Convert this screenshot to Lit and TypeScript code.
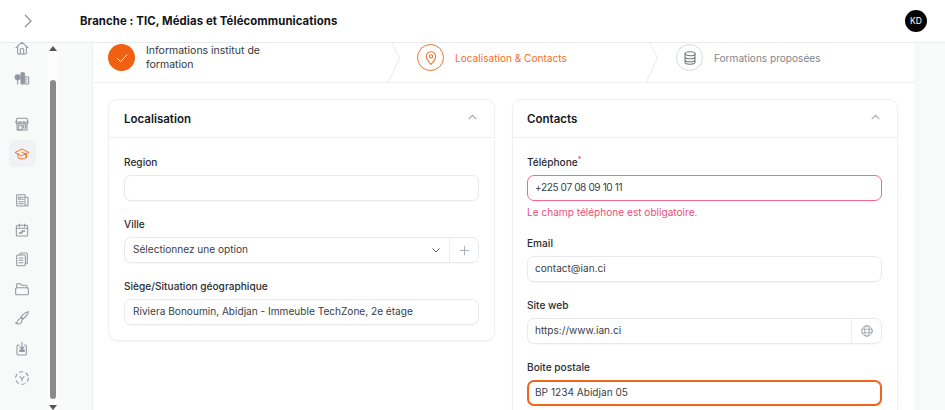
import { LitElement, html, css, svg } from "lit";
import { customElement } from "lit/decorators.js";

const ic = (body: unknown, cls = "") => html`<svg class="ic ${cls}" viewBox="0 0 24 24" fill="none" stroke="currentColor" stroke-width="1.6" stroke-linecap="round" stroke-linejoin="round">${body}</svg>`;

const icons = {
  home: svg`<path d="M3 11.500 12 3.500l9 8"/><path d="M5.500 9.500V20a1 1 0 0 0 1 1h11a1 1 0 0 0 1-1V9.500"/><path d="M9.500 21v-6a2.500 2.500 0 0 1 5 0v6"/>`,
  trees: svg`<circle cx="5.500" cy="11" r="3.800" fill="currentColor"/><path d="M5.500 12v9"/><rect x="10.500" y="4" width="5" height="17" rx="1" fill="currentColor"/><rect x="16.500" y="10" width="5.500" height="11" rx="1"/><path d="M19.200 13v1M19.200 16.500v1"/>`,
  store: svg`<path d="M4.500 3.500h15l1.500 5.500H3z"/><path d="M3 9a3 3 0 0 0 6 0 3 3 0 0 0 6 0 3 3 0 0 0 6 0"/><path d="M4.500 11.500V21h15v-9.500"/><rect x="7" y="14" width="5" height="7"/><rect x="14" y="14" width="3.500" height="4"/>`,
  grad: svg`<g stroke-width="1.300"><path d="M2 9.500 12 4.500l10 5-10 5z"/><path d="M6 12v5.500c2 2.500 10 2.500 12 0V12"/><path d="M12 9.500l6.500 3v5"/></g>`,
  news: svg`<path d="M4 4h12.500v17H5a1 1 0 0 1-1-1z"/><path d="M16.500 8H20a1 1 0 0 1 1 1v10.500a1.500 1.500 0 0 1-3 0"/><rect x="7" y="7.500" width="3.500" height="3.500"/><path d="M12.500 8h1.500M12.500 11h1.500M7 14.500h7M7 17.500h7"/>`,
  cal: svg`<rect x="3.500" y="5" width="17" height="16" rx="2"/><path d="M8 3v4M16 3v4M3.500 9.500h17"/><path d="M8 16.500h4v-3h4" stroke-width="2.200"/>`,
  docs: svg`<path d="M9 6V4.500A1.500 1.500 0 0 1 10.500 3H18a2 2 0 0 1 2 2v12.500a1.500 1.500 0 0 1-1.500 1.500H17"/><rect x="4" y="6" width="13" height="16" rx="1.500"/><path d="M7.500 10.500h6M7.500 14h6M7.500 17.500h6"/>`,
  folder: svg`<path d="M4 10V5.500A1.500 1.500 0 0 1 5.500 4h4l2.500 2.500h6A1.500 1.500 0 0 1 19.500 8v2"/><path d="M2.500 11.500A1.500 1.500 0 0 1 4 10h16a1.500 1.500 0 0 1 1.500 1.500V19a1.500 1.500 0 0 1-1.500 1.500H4A1.500 1.500 0 0 1 2.500 19z"/>`,
  brush: svg`<path d="M21.500 2.500c-3 .5-8 4-11 8l3 3c4-3 7.500-8 8-11z"/><path d="M10 11l3 3"/><path d="M9.500 13c-3 0-3.500 2-4 4-.3 1.200-1.500 2-3 2.500 2 2 7 2 8.500-.5 1-1.500 1-3 .5-3.500"/>`,
  dl: svg`<path d="M12 2v10M9 9l3 3 3-3"/><path d="M8 6H6a1.500 1.500 0 0 0-1.500 1.500V19A2 2 0 0 0 6.500 21h10a2 2 0 0 0 2-2V7.500A1.500 1.500 0 0 0 17 6h-1"/><rect x="8" y="12.500" width="8" height="4" fill="currentColor" stroke="none"/>`,
  dash: svg`<circle cx="12" cy="12" r="9.500" stroke-dasharray="5 4.950"/><path d="M9 10l3 3.500 3-3.500M12 13.500V16"/>`,
};

@customElement("app-root")
export class AppRoot extends LitElement {
  static styles = css`
    :host { display: block; width: 945px; height: 410px; overflow: hidden; background: #f8f9f9; font-family: Inter, "Liberation Sans", sans-serif; color: #1c1f24; }
    .ic { width: 16px; height: 16px; display: block; }
    header { height: 42px; background: #fff; border-bottom: 1px solid #e9ebee; display: flex; align-items: center; box-sizing: content-box; }
    .toggle { width: 16px; height: 16px; color: #8b8f96; margin-left: 20px; }
    h1 { margin: 0 0 0 44px; font-size: 11.350px; font-weight: 700; color: #111318; flex: 1; letter-spacing: 0.1px; }
    .avatar { width: 22px; height: 22px; border-radius: 50%; background: #050507; color: #fff; font-size: 8.500px; display: flex; align-items: center; justify-content: center; margin-right: 18px; }
    .body { display: flex; height: 367px; }
    .side { width: 92px; flex: none; display: flex; box-sizing: border-box; }
    .rail { width: 47px; flex: none; display: flex; flex-direction: column; align-items: center; box-sizing: border-box; color: #93979f; }
    .rail > div { width: 27px; height: 27px; display: flex; align-items: center; justify-content: center; margin-left: -3px; border-radius: 6px; }
    .rail .active { background: #f1f2f4; color: #f4600c; }
    .rail > .g1 { margin-top: -9px; }
    .rail > .m3 { margin-top: 3px; }
    .rail > .m2 { margin-top: 2px; }
    .rail > .m4 { margin-top: 4px; }
    .rail > .m19 { margin-top: 19px; }
    .sb { width: 11px; flex: none; display: flex; flex-direction: column; align-items: center; background: #fcfcfc; }
    .tri-up { width: 0; height: 0; border: 4px solid transparent; border-top: 0; border-bottom: 5px solid #555; margin-top: 3px; flex: none; }
    .tri-dn { width: 0; height: 0; border: 4px solid transparent; border-bottom: 0; border-top: 5px solid #555; margin-top: 6px; flex: none; }
    .thumb { width: 6px; height: 319px; background: #8a8a8a; border-radius: 3px; margin-top: 29px; flex: none; }
    main { width: 822px; flex: none; background: #fff; border-left: 1px solid #eff0f2; box-sizing: border-box; }
    .steps { height: 40px; border-bottom: 1px solid #eceef0; display: flex; box-sizing: border-box; }
    .step { display: flex; align-items: center; font-size: 10.100px; box-sizing: border-box; position: relative; padding-bottom: 10px; }
    .s1 { width: 299px; padding-left: 15px; gap: 11px; line-height: 13.500px; color: #33373d; font-size: 10.500px; }
    .s2 { width: 258px; padding-left: 25px; gap: 11px; color: #f2702a; }
    .s3 { flex: 1; padding-left: 26px; gap: 11px; color: #80858d; }
    .chev { position: absolute; right: -8px; top: 0; width: 13px; height: 40px; color: #e8eaed; z-index: 1; }
    .circle { width: 27px; height: 27px; border-radius: 50%; box-sizing: border-box; display: flex; align-items: center; justify-content: center; flex: none; }
    .done { background: #f15f13; color: #fff; }
    .cur { border: 1.500px solid #f2702a; color: #f2702a; }
    .todo { border: 1.500px solid #d6d9de; color: #70757d; }
    .cols { display: grid; grid-template-columns: 387px 386px; column-gap: 17px; padding: 16px 0 0 15px; align-items: start; }
    .card { border: 1px solid #eef0f2; border-radius: 9px; box-shadow: 0 1px 2px rgba(20,30,40,.04); background: #fff; padding-bottom: 15px; box-sizing: border-box; }
    .ch { height: 38px; border-bottom: 1px solid #eef0f2; display: flex; align-items: center; justify-content: space-between; padding: 0 15px 0 15px; box-sizing: border-box; }
    .right .ch { padding-left: 14px; }
    h2 { margin: 0; font-size: 11.500px; font-weight: 600; color: #14171c; }
    .up { width: 13px; height: 13px; color: #a2a6ad; margin-top: -2px; }
    .fields { padding: 18px 15px 0 15px; display: flex; flex-direction: column; }
    .right .fields { padding-left: 14px; }
    .f { display: flex; flex-direction: column; }
    .f + .f { margin-top: 17px; }
    label { font-size: 10.150px; font-weight: 500; color: #2a2e34; line-height: 13px; margin-bottom: 6px; }
    label sup { color: #e8406a; font-size: 7px; line-height: 0; }
    .input { height: 26px; box-sizing: border-box; border: 1px solid #e7e9ec; border-radius: 7px; display: flex; align-items: center; font-size: 10.100px; color: #3c4047; box-shadow: 0 1px 1px rgba(20,30,40,.03); }
    .input > span:first-child { flex: 1; padding: 0 0 2px 7px; }
    .left .input > span:first-child { padding-left: 8px; }
    .addon { width: 29px; height: 100%; border-left: 1px solid #eceef0; display: flex; align-items: center; justify-content: center; color: #a2a6ad; box-sizing: border-box; }
    .addon .ic { width: 13px; height: 13px; }
    .addon.web { width: 30px; }
    .addon.web .ic { width: 14px; height: 14px; }
    .caret { width: 12px; height: 12px; color: #555a62; margin-right: 7px; }
    .err { border: 1.500px solid #ee6d8c; }
    .err > span:first-child { letter-spacing: -0.400px; }
    .focus { border: 2px solid #f1641a; }
    .input.focus > span:first-child { padding-left: 6px; }
    .msg { font-size: 10.100px; color: #ea4f78; margin-top: 5px; line-height: 13px; }
    .tight + .f { margin-top: 18px; }
  `;

  private rail() {
    const r: [unknown, string][] = [
      [icons.home, "g1"], [icons.trees, "m3"], [icons.store, "m19"],
      [icons.grad, "m3 active"], [icons.news, "m19"], [icons.cal, "m3"],
      [icons.docs, "m2"], [icons.folder, "m3"], [icons.brush, "m2"],
      [icons.dl, "m4"], [icons.dash, "m2"],
    ];
    return r.map(([b, c]) => html`<div class=${c}>${ic(b)}</div>`);
  }

  render() {
    const chev = html`<svg class="chev" viewBox="0 0 13 40" fill="none" stroke="currentColor"><path d="M5 0 12.500 15 1 40"/></svg>`;
    const up = html`<svg class="up" viewBox="0 0 24 24" fill="none" stroke="currentColor" stroke-width="2"><path d="M5 15l7-7 7 7"/></svg>`;
    return html`
      <header>
        <svg class="toggle" viewBox="0 0 16 16" fill="none" stroke="currentColor" stroke-width="1.200"><path d="M5 2l6 6-6 6"/></svg>
        <h1>Branche : TIC, Médias et Télécommunications</h1>
        <div class="avatar">KD</div>
      </header>
      <div class="body">
        <aside class="side">
          <div class="rail">${this.rail()}</div>
          <div class="sb"><i class="tri-up"></i><i class="thumb"></i><i class="tri-dn"></i></div>
        </aside>
        <main>
          <div class="steps">
            <div class="step s1">
              <div class="circle done"><svg class="ic" viewBox="0 0 24 24" fill="none" stroke="currentColor" stroke-width="1.500"><path d="M5 12.500l5 5 9.500-10.500"/></svg></div>
              <span>Informations institut de<br />formation</span>${chev}
            </div>
            <div class="step s2">
              <div class="circle cur">${ic(svg`<path d="M12 21.500s-7-6.500-7-12a7 7 0 0 1 14 0c0 5.500-7 12-7 12z"/><circle cx="12" cy="9.500" r="2.500"/>`)}</div>
              <span>Localisation &amp; Contacts</span>${chev}
            </div>
            <div class="step s3">
              <div class="circle todo">${ic(svg`<ellipse cx="12" cy="5.500" rx="7.500" ry="3"/><path d="M4.500 5.500v13c0 1.700 3.400 3 7.500 3s7.500-1.300 7.500-3v-13M4.500 10c0 1.700 3.400 3 7.500 3s7.500-1.300 7.500-3M4.500 14.500c0 1.700 3.400 3 7.500 3s7.500-1.300 7.500-3"/>`)}</div>
              <span>Formations proposées</span>
            </div>
          </div>
          <div class="cols">
            <section class="card left">
              <div class="ch"><h2>Localisation</h2>${up}</div>
              <div class="fields">
                <div class="f"><label>Region</label><div class="input"><span></span></div></div>
                <div class="f"><label>Ville</label>
                  <div class="input"><span>Sélectionnez une option</span>
                    <svg class="caret" viewBox="0 0 24 24" fill="none" stroke="currentColor" stroke-width="2"><path d="M5 9l7 7 7-7"/></svg>
                    <div class="addon">${ic(svg`<path d="M12 4v16M4 12h16"/>`)}</div>
                  </div>
                </div>
                <div class="f"><label>Siège/Situation géographique</label><div class="input"><span>Riviera Bonoumin, Abidjan - Immeuble TechZone, 2e étage</span></div></div>
              </div>
            </section>
            <section class="card right">
              <div class="ch"><h2>Contacts</h2>${up}</div>
              <div class="fields">
                <div class="f tight"><label>Téléphone<sup>*</sup></label><div class="input err"><span>+225 07 08 09 10 11</span></div><div class="msg">Le champ téléphone est obligatoire.</div></div>
                <div class="f"><label>Email</label><div class="input"><span>contact@ian.ci</span></div></div>
                <div class="f"><label>Site web</label><div class="input"><span>https://www.ian.ci</span>
                  <div class="addon web">${ic(svg`<circle cx="12" cy="12" r="9"/><ellipse cx="12" cy="12" rx="4" ry="9"/><path d="M3.500 9h17M3.500 15h17"/>`)}</div></div></div>
                <div class="f"><label>Boite postale</label><div class="input focus"><span>BP 1234 Abidjan 05</span></div></div>
              </div>
            </section>
          </div>
        </main>
      </div>
    `;
  }
}
